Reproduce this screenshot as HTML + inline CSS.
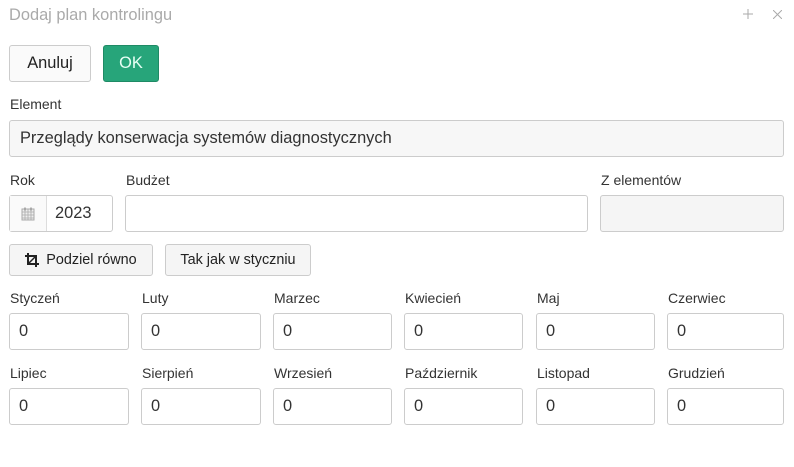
<!DOCTYPE html>
<html><head><meta charset="utf-8"><style>
*{box-sizing:border-box}
body{margin:0;width:794px;height:467px;background:#fff;font-family:"Liberation Sans",sans-serif;color:#333;position:relative;overflow:hidden}
.a{position:absolute}
.lbl{position:absolute;font-size:14px;color:#333}
.inp{position:absolute;border:1px solid #ccc;border-radius:3px;background:#fff;font-size:16.4px;padding-left:9px;display:flex;align-items:center;color:#333}
.btn{position:absolute;border:1px solid #ccc;border-radius:3px;background:#f5f5f5;font-size:14.4px;display:flex;align-items:center;justify-content:center;color:#222}
</style></head><body>
<div class="a" style="left:9px;top:6px;font-size:16.4px;color:#aaa">Dodaj plan kontrolingu</div>
<svg class="a" style="left:743px;top:9px" width="10" height="10" viewBox="0 0 10 10"><path d="M5 0v10M0 5h10" stroke="#aaa" stroke-width="1"/></svg>
<svg class="a" style="left:773px;top:10px" width="9" height="9" viewBox="0 0 9 9"><path d="M0 0l9 9M9 0l-9 9" stroke="#aaa" stroke-width="1"/></svg>
<div class="btn" style="left:9px;top:45px;width:82px;height:37px;font-size:16.4px;background:#fafafa">Anuluj</div>
<div class="btn" style="left:103px;top:45px;width:56px;height:37px;font-size:16.4px;background:#27a57a;border-color:#1f8a65;color:#e8fff5">OK</div>
<div class="lbl" style="left:10px;top:96px">Element</div>
<div class="inp" style="left:9px;top:120px;width:775px;height:37px;background:#f7f7f7;padding-left:10px">Przeglądy konserwacja systemów diagnostycznych</div>
<div class="lbl" style="left:10px;top:172px">Rok</div>
<div class="lbl" style="left:126px;top:172px">Budżet</div>
<div class="lbl" style="left:601px;top:172px">Z elementów</div>
<div class="inp" style="left:9px;top:195px;width:104px;height:37px;padding:0">
<div style="width:37px;height:100%;border-right:1px solid #ddd;background:#fafafa;display:flex;align-items:center;justify-content:center"><svg width="14" height="14" viewBox="0 0 14 14"><rect x="1" y="2" width="12" height="11" fill="#eee" stroke="#aaa"/><path d="M1 5h12M4 2v11M7 2v11M10 2v11M1 8h12M1 11h12" stroke="#aaa" stroke-width=".8"/><path d="M4 0.5v3M10 0.5v3" stroke="#999" stroke-width="1.5"/></svg></div>
<div style="padding-left:8px">2023</div></div>
<div class="inp" style="left:125px;top:195px;width:463px;height:37px"></div>
<div class="inp" style="left:600px;top:195px;width:184px;height:37px;background:#f5f5f5"></div>
<div class="btn" style="left:9px;top:244px;width:144px;height:32px"><svg width="14" height="14" viewBox="0 0 14 14" style="margin-right:7px"><path d="M3 0v11h11M0 3h11v11" fill="none" stroke="#222" stroke-width="2"/><path d="M11 3L3 11" stroke="#222" stroke-width="1.5"/></svg>Podziel równo</div>
<div class="btn" style="left:165px;top:244px;width:146px;height:32px">Tak jak w styczniu</div>
<div class="lbl" style="left:10px;top:290px">Styczeń</div><div class="inp" style="left:9px;top:313px;width:120px;height:37px">0</div>
<div class="lbl" style="left:142px;top:290px">Luty</div><div class="inp" style="left:141px;top:313px;width:120px;height:37px">0</div>
<div class="lbl" style="left:274px;top:290px">Marzec</div><div class="inp" style="left:273px;top:313px;width:119px;height:37px">0</div>
<div class="lbl" style="left:405px;top:290px">Kwiecień</div><div class="inp" style="left:404px;top:313px;width:119px;height:37px">0</div>
<div class="lbl" style="left:537px;top:290px">Maj</div><div class="inp" style="left:536px;top:313px;width:119px;height:37px">0</div>
<div class="lbl" style="left:668px;top:290px">Czerwiec</div><div class="inp" style="left:667px;top:313px;width:117px;height:37px">0</div>
<div class="lbl" style="left:10px;top:365px">Lipiec</div><div class="inp" style="left:9px;top:388px;width:120px;height:37px">0</div>
<div class="lbl" style="left:142px;top:365px">Sierpień</div><div class="inp" style="left:141px;top:388px;width:120px;height:37px">0</div>
<div class="lbl" style="left:274px;top:365px">Wrzesień</div><div class="inp" style="left:273px;top:388px;width:119px;height:37px">0</div>
<div class="lbl" style="left:405px;top:365px">Październik</div><div class="inp" style="left:404px;top:388px;width:119px;height:37px">0</div>
<div class="lbl" style="left:537px;top:365px">Listopad</div><div class="inp" style="left:536px;top:388px;width:119px;height:37px">0</div>
<div class="lbl" style="left:668px;top:365px">Grudzień</div><div class="inp" style="left:667px;top:388px;width:117px;height:37px">0</div>
</body></html>
